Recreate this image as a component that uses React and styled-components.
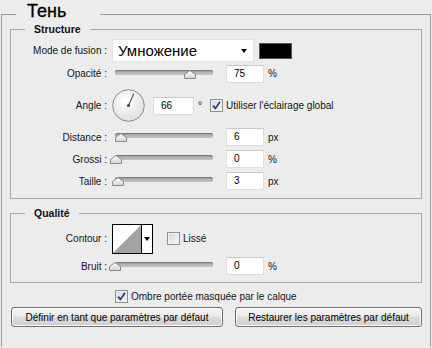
import React from "react";
import styled, { createGlobalStyle } from "styled-components";

const Global = createGlobalStyle`
  html, body {
    margin: 0;
    overflow: hidden;
    background: #ececec;
  }
  body {
    font-family: "Liberation Sans", Arial, sans-serif;
    font-size: 10px;
    color: #151515;
  }
`;

const Panel = styled.fieldset`
  margin: 2px 1px 0;
  padding: 0 0 20px;
  min-width: 0;
  border: 1px solid #9e9e9e;
  border-bottom: 0;
`;

const Title = styled.legend`
  box-sizing: border-box;
  width: 84px;
  margin-left: 14px;
  padding: 0 11px 6px;
  font-size: 18px;
  line-height: 18px;
  color: #000;
  -webkit-text-stroke: 0.3px #000;
`;

const Group = styled.fieldset`
  margin: ${(p) => p.$top}px 8px 0;
  padding: 0 0 ${(p) => p.$bottom}px;
  min-width: 0;
  border: 1px solid #a8a8a8;
`;

const GroupTitle = styled.legend`
  margin-left: 14px;
  padding: 0 9px;
  font-weight: bold;
  font-size: 10.5px;
  line-height: 12px;
  color: #111;
`;

const Rows = styled.div`
  display: flex;
  flex-direction: column;
  padding-top: ${(p) => p.$pad}px;
`;

const Row = styled.div`
  display: flex;
  align-items: center;
  height: ${(p) => p.$h}px;
`;

const Label = styled.span`
  width: 96px;
  margin-right: 5px;
  text-align: right;
  white-space: nowrap;
`;

const Select = styled.div`
  box-sizing: border-box;
  display: flex;
  align-items: center;
  justify-content: space-between;
  width: 142px;
  height: 23px;
  padding: 0 6px 0 5px;
  background: #fff;
  border: 1px solid #e2e2e2;
  font-size: 15px;
  color: #000;
`;

const Caret = styled.span`
  width: 0;
  height: 0;
  border-left: 3.5px solid transparent;
  border-right: 3.5px solid transparent;
  border-top: 4px solid #000;
`;

const Swatch = styled.div`
  box-sizing: border-box;
  width: 33px;
  height: 16px;
  margin-left: 5px;
  background: #000;
  border: 1px solid #555;
`;

const Slider = styled.div`
  position: relative;
  width: 98px;
  height: 12px;
  margin-left: 3px;
  margin-right: 13px;
`;

const Track = styled.div`
  position: absolute;
  left: 0;
  right: 0;
  top: 2px;
  height: 5px;
  border-radius: 3px;
  background: linear-gradient(#8c8c8c, #b4b4b4 50%, #c2c2c2);
  box-shadow: inset 0 1px 0 #7a7a7a;
`;

const Thumb = styled.svg`
  position: absolute;
  top: 2px;
  left: ${(p) => p.$pos - 6}px;
`;

const Field = styled.div`
  box-sizing: border-box;
  width: ${(p) => p.$w}px;
  height: 18px;
  padding-left: 7px;
  line-height: 16px;
  background: #fff;
  border: 1px solid #dedede;
  border-top-color: #c9c9c9;
  color: #000;
`;

const Unit = styled.span`
  margin-left: 4px;
`;

const Dial = styled.svg`
  display: block;
  margin-right: 8px;
`;

const Box = styled.span`
  box-sizing: border-box;
  display: inline-flex;
  align-items: center;
  justify-content: center;
  width: 13px;
  height: 13px;
  margin-left: ${(p) => p.$ml}px;
  margin-right: 3px;
  border: 1px solid #8f8f8f;
  background: linear-gradient(135deg, #d4d7dc, #f6f6f6);
  box-shadow: inset 0 0 0 1px #f3f3f3;
`;

const Contour = styled.div`
  box-sizing: border-box;
  display: flex;
  width: 41px;
  height: 30px;
  border: 1px solid #000;
  background: #fff;
`;

const ContourArrow = styled.div`
  display: flex;
  align-items: center;
  justify-content: center;
  flex: 1;
  border-left: 1px solid #000;
`;

const Check = styled.div`
  display: flex;
  align-items: center;
  height: 18px;
  margin-top: 4px;
  padding-left: 113px;
`;

const Buttons = styled.div`
  display: flex;
  gap: 12px;
  margin-top: 2px;
  padding-left: 9px;
`;

const Button = styled.button`
  box-sizing: border-box;
  width: ${(p) => p.$w}px;
  height: 20px;
  padding: 0;
  border: 1px solid #707070;
  border-radius: 3px;
  background: linear-gradient(#f2f2f2 0%, #ebebeb 45%, #dddddd 50%, #cfcfcf 100%);
  box-shadow: inset 0 0 0 1px #fbfbfb;
  font-family: inherit;
  font-size: 10px;
  color: #000;
`;

function Tick({ on }) {
  return (
    <svg width="9" height="9" viewBox="0 0 9 9">
      {on && (
        <path d="M1 4.6 L3.4 7.4 L8 0.8" fill="none" stroke="#2b3d78" strokeWidth="1.7" />
      )}
    </svg>
  );
}

function SliderRow({ label, value, unit, pos, h = 22 }) {
  return (
    <Row $h={h}>
      <Label>{label}</Label>
      <Slider>
        <Track />
        <Thumb $pos={pos} width="12" height="9" viewBox="0 0 12 9">
          <defs>
            <linearGradient id="tg" x1="0" y1="0" x2="0" y2="1">
              <stop offset="0" stopColor="#ffffff" />
              <stop offset="1" stopColor="#d4d4d4" />
            </linearGradient>
          </defs>
          <path d="M0.5 8.5 V4.5 L6 0.5 L11.5 4.5 V8.5 Z" fill="url(#tg)" stroke="#8a8a8a" />
        </Thumb>
      </Slider>
      <Field $w={38}>{value}</Field>
      <Unit>{unit}</Unit>
    </Row>
  );
}

export default function App() {
  const a = (66 * Math.PI) / 180;
  return (
    <>
      <Global />
      <Panel>
        <Title>Тень</Title>
        <Group $top={-3} $bottom={6}>
          <GroupTitle>Structure</GroupTitle>
          <Rows $pad={4}>
            <Row $h={23}>
              <Label>Mode de fusion :</Label>
              <Select>
                Умножение
                <Caret />
              </Select>
              <Swatch />
            </Row>
            <SliderRow label="Opacité :" value="75" unit="%" pos={75} h={23} />
            <Row $h={41}>
              <Label>Angle :</Label>
              <Dial width="33" height="33" viewBox="0 0 33 33">
                <defs>
                  <radialGradient id="dg" cx="0.4" cy="0.35" r="0.7">
                    <stop offset="0" stopColor="#ffffff" />
                    <stop offset="1" stopColor="#dedede" />
                  </radialGradient>
                </defs>
                <circle cx="16.5" cy="16.5" r="15.8" fill="url(#dg)" stroke="#8c8c8c" />
                <line
                  x1="16.5"
                  y1="16.5"
                  x2={16.5 + 13 * Math.cos(a)}
                  y2={16.5 - 13 * Math.sin(a)}
                  stroke="#555"
                  strokeWidth="1.2"
                />
                <circle cx="16.5" cy="16.5" r="1.6" fill="#444" />
              </Dial>
              <Field $w={41}>66</Field>
              <Unit>°</Unit>
              <Box $ml={8}>
                <Tick on />
              </Box>
              <span>Utiliser l'éclairage global</span>
            </Row>
            <SliderRow label="Distance :" value="6" unit="px" pos={6} />
            <SliderRow label="Grossi :" value="0" unit="%" pos={1} />
            <SliderRow label="Taille :" value="3" unit="px" pos={3} />
          </Rows>
        </Group>

        <Group $top={8} $bottom={5}>
          <GroupTitle>Qualité</GroupTitle>
          <Rows $pad={3}>
            <Row $h={33}>
              <Label>Contour :</Label>
              <Contour>
                <svg width="28" height="28" viewBox="0 0 28 28">
                  <path d="M0 28 L28 0 L28 28 Z" fill="#a3a3a3" />
                </svg>
                <ContourArrow>
                  <Caret />
                </ContourArrow>
              </Contour>
              <Box $ml={14}>
                <Tick />
              </Box>
              <span>Lissé</span>
            </Row>
            <SliderRow label="Bruit :" value="0" unit="%" pos={0} />
          </Rows>
        </Group>

        <Check>
          <Box $ml={0}>
            <Tick on />
          </Box>
          <span>Ombre portée masquée par le calque</span>
        </Check>

        <Buttons>
          <Button $w={212}>Définir en tant que paramètres par défaut</Button>
          <Button $w={187}>Restaurer les paramètres par défaut</Button>
        </Buttons>
      </Panel>
    </>
  );
}
